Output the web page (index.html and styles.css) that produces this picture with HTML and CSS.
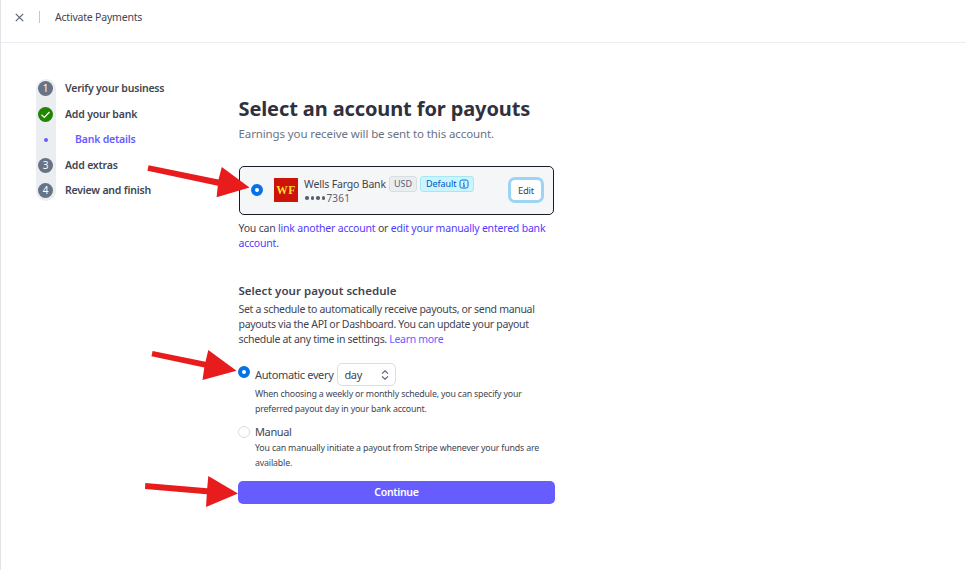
FILE: index.html
```html
<!DOCTYPE html>
<html lang="en">
<head>
<meta charset="utf-8">
<title>Activate Payments</title>
<link rel="stylesheet" href="styles.css">
</head>
<body>
<header class="topbar">
  <svg class="close" viewBox="0 0 9 9" width="9" height="9"><path d="M.8.8 8.2 8.2M8.2.8.8 8.2"/></svg>
  <span class="rule"></span>
  <span class="topbar-title">Activate Payments</span>
</header>
<div class="page">
  <nav class="steps">
    <div class="rail">
      <span class="num">1</span>
      <span class="num done"><svg viewBox="0 0 15 15" width="15" height="15"><path d="M3.5 7.8 6.3 10.4 11.5 5"/></svg></span>
      <span class="dot"></span>
      <span class="num">3</span>
      <span class="num">4</span>
    </div>
    <div class="labels">
      <span>Verify your business</span>
      <span>Add your bank</span>
      <span class="sub">Bank details</span>
      <span>Add extras</span>
      <span>Review and finish</span>
    </div>
  </nav>
  <main class="content">
    <h1>Select an account for payouts</h1>
    <p class="lead">Earnings you receive will be sent to this account.</p>
    <section class="account">
      <span class="radio on"></span>
      <span class="logo">WF</span>
      <div class="bank">
        <div class="bank-row"><span class="bank-name">Wells Fargo Bank</span><span class="tag">USD</span><span class="tag info">Default<svg viewBox="0 0 10 10" width="10" height="10"><rect x="1" y="1" width="8" height="8" rx="1.8"/><path d="M5 4.5V7.3M5 2.6v1M4 4.7h1M4 7.2h2"/></svg></span></div>
        <div class="digits"><span class="bullets"><i></i><i></i><i></i><i></i></span>7361</div>
      </div>
      <button class="edit">Edit</button>
    </section>
    <p class="links">You can <a>link another account</a> or <a>edit your manually entered bank</a><br><a>account</a>.</p>
    <h2>Select your payout schedule</h2>
    <p class="desc">Set a schedule to automatically receive payouts, or send manual<br>payouts via the API or Dashboard. You can update your payout<br>schedule at any time in settings. <a>Learn more</a></p>
    <div class="option auto">
      <span class="radio on"></span>
      <div>
        <div class="option-row"><span class="option-title">Automatic every</span><span class="select">day<svg viewBox="0 0 8 10" width="8" height="10"><path d="M1 3.6 4 .9 7 3.6M1 6.4 4 9.1 7 6.4"/></svg></span></div>
        <p class="hint">When choosing a weekly or monthly schedule, you can specify your<br>preferred payout day in your bank account.</p>
      </div>
    </div>
    <div class="option manual">
      <span class="radio"></span>
      <div>
        <div class="option-title man">Manual</div>
        <p class="hint">You can manually initiate a payout from Stripe whenever your funds are<br>available.</p>
      </div>
    </div>
    <button class="continue">Continue</button>
  </main>
</div>
<svg class="arrows" viewBox="0 0 966 570" width="966" height="570">
  <path d="M148.600 165.300 218.500 179.400 221.800 167 249.500 187.500 216.600 197.300 217.800 185.700 147.400 170.700Z"/>
  <path d="M152.600 351 205.500 361.800 208.300 350 236.500 370.800 202.500 380 204.300 367.600 151.500 356.300Z"/>
  <path d="M145.300 483 207.200 488.300 208.300 476 238 493.500 206 507 206.800 494.200 145 488.900Z"/>
</svg>
</body>
</html>
```
FILE: styles.css
```css
* { box-sizing: border-box; }
body {
  margin: 0;
  width: 966px;
  height: 570px;
  overflow: hidden;
  position: relative;
  background: #fff;
  border-left: 1px solid #e3e4e8;
  font-family: "Noto Sans", sans-serif;
  font-size: 10.500px;
  color: #414552;
  white-space: nowrap;
}
h1, h2, p { margin: 0; }
a { color: #533afd; }
button { font-family: inherit; padding: 0; }
path { fill: none; }

.topbar {
  display: flex;
  align-items: center;
  height: 43px;
  padding: 0 0 8px 14px;
  border-bottom: 1px solid #ebeef1;
}
.close path { stroke: #596171; stroke-width: 1.2; }
.rule { width: 1px; height: 12px; margin: 0 15px; background: #c0c8d2; }
.topbar-title { letter-spacing: -0.2px; margin-top: -1px; }

.page { display: flex; padding-left: 35px; }
.steps { display: flex; width: 202px; padding-top: 36px; }
.rail {
  display: flex;
  flex-direction: column;
  align-items: flex-start;
  width: 20px;
  height: 122px;
  padding: 2px 0 0 2px;
  border-radius: 10px;
  background: #ebeef1;
}
.num {
  display: flex;
  align-items: center;
  justify-content: center;
  width: 15px;
  height: 15px;
  flex: none;
  margin-bottom: 11px;
  border-radius: 50%;
  background: #687385;
  color: #fff;
  font-size: 10px;
  line-height: 15px;
}
.num.done { background: #228403; margin-bottom: 16px; }
.done path { stroke: #fff; stroke-width: 1.2; }
.dot { width: 4px; height: 4px; flex: none; margin: 0 0 16px 6px; border-radius: 50%; background: #675dff; }
.num:nth-child(4) { margin-bottom: 10px; }
.labels {
  display: grid;
  grid-template-rows: 26px 26px 24px 27px 24px;
  line-height: 16px;
  height: 128px;
  margin: -4px 0 0 9px;
  align-items: center;
  font-weight: 600;
  letter-spacing: -0.2px;
}
.sub { padding-left: 10px; margin-top: -1px; color: #675dff; }
.labels span:last-child { margin-top: -1px; }

.content { width: 317px; padding-top: 52px; }
h1 { font-size: 20px; line-height: 28px; font-weight: 700; color: #30313d; letter-spacing: -0.11px; padding-left: .5px; }
.lead { font-size: 11.500px; line-height: 18px; margin-top: 2px; color: #687385; letter-spacing: -0.11px; padding-left: .5px; }
.account {
  display: flex;
  align-items: center;
  height: 49px;
  width: 315px;
  margin-top: 23px;
  margin-left: 1px;
  padding: 0 9px 1px 11px;
  border: 1px solid #1a1b25;
  border-radius: 5px;
  background: #f5f6f8;
}
.radio { width: 12px; height: 12px; flex: none; border: 1px solid #d8dee4; border-radius: 50%; background: #fff; }
.radio.on { border: 4px solid #0572e8; }
.logo {
  width: 24px;
  height: 24px;
  margin: 0 6px 0 11px;
  background: #cd1409;
  color: #ffde2e;
  font: bold 11.500px/24px "Liberation Serif", serif;
  letter-spacing: .4px;
  text-align: center;
}
.bank { flex: 1; }
.bank-row { display: flex; align-items: center; height: 16px; }
.bank-name { width: 85px; letter-spacing: -0.17px; }
.tag {
  display: flex;
  align-items: center;
  height: 16px;
  padding: 0 4px;
  margin-right: 3px;
  border: 1px solid #d8dee4;
  border-radius: 3px;
  background: #ebeef1;
  color: #596171;
  font-size: 9px;
}
.tag.info { background: #cbf5fd; border-color: #a8e6f7; color: #0055bc; padding: 0 4px 0 5px; letter-spacing: -0.1px; }
.tag svg { margin-left: 2.500px; fill: none; stroke: #0570de; stroke-width: 1; }
.digits { display: flex; align-items: center; height: 13px; font-size: 10px; color: #596171; letter-spacing: .2px; }
.bullets { display: flex; gap: 2px; margin: 0 1px; }
.bullets i { width: 3.600px; height: 3.600px; border-radius: 50%; background: #596171; }
.edit {
  width: 36px;
  height: 26px;
  border: 3px solid #9dd3f5;
  border-radius: 7px;
  background: #fff;
  color: #414552;
  font-size: 9.500px;
  letter-spacing: -0.2px;
}
.links { line-height: 15px; margin-top: 6px; padding-left: .5px; letter-spacing: -0.2px; }
h2 { font-size: 11.500px; line-height: 18px; margin-top: 31px; padding-left: .5px; font-weight: 600; letter-spacing: 0.02px; }
.desc { line-height: 15px; margin-top: 2px; padding-left: .5px; letter-spacing: -0.31px; }
.desc a { color: #675dff; }
.option { display: flex; }
.option .radio { margin-right: 5px; }
.auto { margin-top: 16px; }
.auto .radio { margin-top: 3px; }
.option-row { display: flex; align-items: center; height: 23px; }
.option-title { font-size: 11px; letter-spacing: -0.36px; }
.select {
  display: flex;
  align-items: center;
  justify-content: space-between;
  width: 59px;
  height: 23px;
  margin-left: 4px;
  padding: 0 6px;
  border: 1px solid #d8dee4;
  border-radius: 5px;
  font-size: 11px;
  letter-spacing: -0.3px;
}
.select path { stroke: #596171; stroke-width: 1.2; }
.hint { font-size: 8.800px; line-height: 15px; padding-top: 1px; letter-spacing: -0.17px; }
.manual { margin-top: 7px; }
.manual .radio { margin-top: 2px; }
.man { line-height: 16px; }
.continue {
  display: block;
  width: 317px;
  height: 23px;
  margin-top: 10px;
  padding-bottom: 2px;
  border: 0;
  border-radius: 5px;
  background: #675dff;
  color: #fff;
  font-size: 10.500px;
  font-weight: 600;
  letter-spacing: -0.3px;
}
.arrows { position: absolute; left: -1px; top: 0; pointer-events: none; }
.arrows path { fill: #e81c1c; }
```
